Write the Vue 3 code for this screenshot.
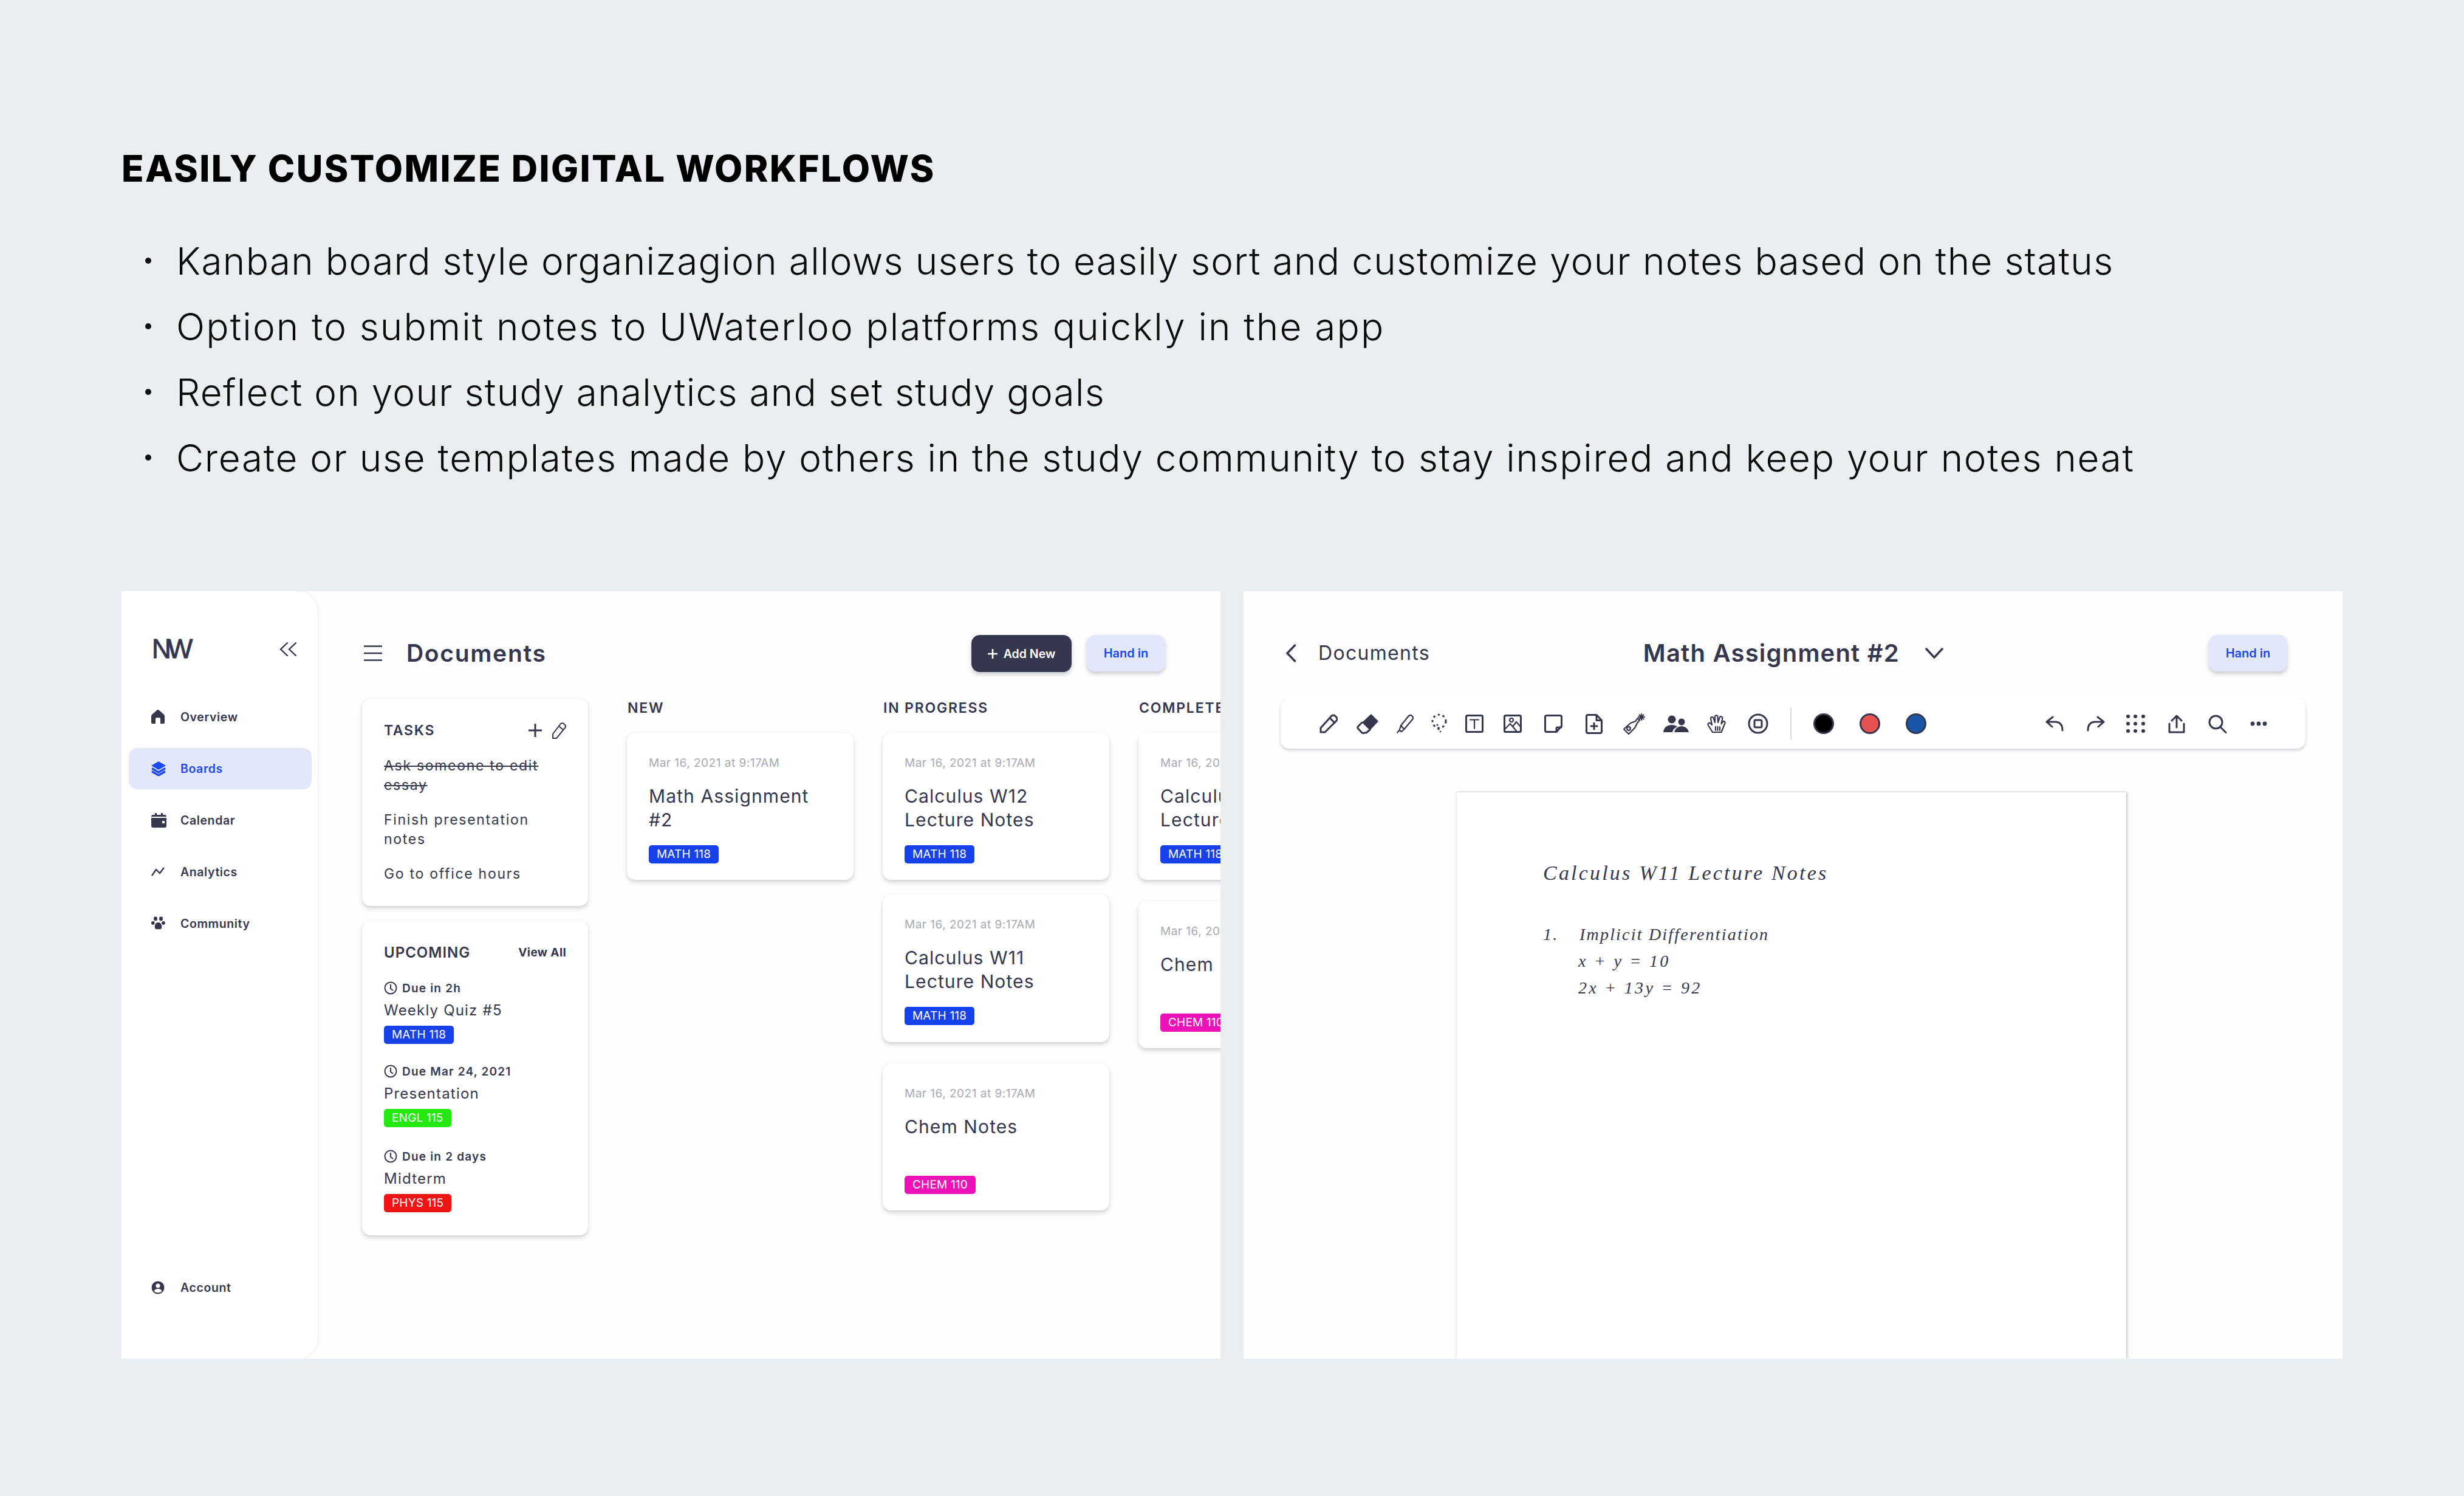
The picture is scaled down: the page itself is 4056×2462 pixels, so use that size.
<script setup>
const bullets = [
  'Kanban board style organizagion allows users to easily sort and customize your notes based on the status',
  'Option to submit notes to UWaterloo platforms quickly in the app',
  'Reflect on your study analytics and set study goals',
  'Create or use templates made by others in the study community to stay inspired and keep your notes neat'
]
const navIcons = {
  Overview: '<path d="M11 0 Q12 0 13 1 L21 8 Q22 9 22 11 V21 Q22 23 20 23 H15 V15 Q15 13 13 13 H9 Q7 13 7 15 V23 H2 Q0 23 0 21 V11 Q0 9 1 8 L9 1 Q10 0 11 0Z" fill="currentColor"/>',
  Boards: '<path d="M12 0 L24 7 L12 14 L0 7Z" fill="currentColor"/><path d="M1 11.5 L12 18 L23 11.5 M1 16.5 L12 23 L23 16.5" fill="none" stroke="currentColor" stroke-width="3.4"/>',
  Calendar: '<path d="M6 0 H9 V3 H16 V0 H19 V3 H22 Q25 3 25 6 V21 Q25 24 22 24 H3 Q0 24 0 21 V6 Q0 3 3 3 H6Z" fill="currentColor"/><rect x="0" y="6" width="25" height="2" fill="#fff"/><rect x="18" y="13" width="4" height="4" fill="#fff"/>',
  Analytics: '<path d="M1 18 L8 8 L14 14 L21 5" fill="none" stroke="currentColor" stroke-width="2.4"/>',
  Community: '<ellipse cx="7" cy="4" rx="3" ry="3.4" fill="currentColor"/><ellipse cx="16" cy="4" rx="3" ry="3.4" fill="currentColor"/><ellipse cx="2.8" cy="11" rx="2.8" ry="3" fill="currentColor"/><ellipse cx="20" cy="11" rx="2.8" ry="3" fill="currentColor"/><path d="M11.5 10 C16 10 18 15 17 19 C16 22.500 13 21 11.500 21 C10 21 7 22.500 6 19 C5 15 7 10 11.500 10Z" fill="currentColor"/>',
  Account: '<circle cx="11" cy="12" r="10.500" fill="currentColor"/><circle cx="11" cy="9" r="3.600" fill="#fff"/><path d="M4.500 18 Q6 14 11 14 Q16 14 17.500 18 Q14.500 20.500 11 20.500 Q7.500 20.500 4.500 18Z" fill="#fff"/>'
}
const nav = ['Overview', 'Boards', 'Calendar', 'Analytics', 'Community']
const tasks = [
  { text: 'Ask someone to edit\nessay', done: true },
  { text: 'Finish presentation\nnotes', done: false },
  { text: 'Go to office hours', done: false }
]
const upcoming = [
  { due: 'Due in 2h', title: 'Weekly Quiz #5', tag: 'MATH 118', color: 'math' },
  { due: 'Due Mar 24, 2021', title: 'Presentation', tag: 'ENGL 115', color: 'engl' },
  { due: 'Due in 2 days', title: 'Midterm', tag: 'PHYS 115', color: 'phys' }
]
const date = 'Mar 16, 2021 at 9:17AM'
const w12 = { title: 'Calculus W12\nLecture Notes', tag: 'MATH 118', color: 'math' }
const columns = [
  { name: 'NEW', cards: [{ title: 'Math Assignment\n#2', tag: 'MATH 118', color: 'math' }] },
  { name: 'IN PROGRESS', cards: [
    w12,
    { title: 'Calculus W11\nLecture Notes', tag: 'MATH 118', color: 'math', near: true },
    { title: 'Chem Notes', tag: 'CHEM 110', color: 'chem' }
  ] },
  { name: 'COMPLETE', cards: [w12, { title: 'Chem Notes', tag: 'CHEM 110', color: 'chem' }] }
]
const S = 'fill="none" stroke="#35374F" stroke-width="3" stroke-linejoin="round" stroke-linecap="round"'
const T = 'fill="none" stroke="#35374F" stroke-width="2.2" stroke-linejoin="round" stroke-linecap="round"'
const tools = [
  { w: 30, h: 32, gap: 0, body: `<path d="M2 30 V23 L20 3 Q23 1 25.500 3 L28 5.500 Q30 8 28 11 L9 30Z M17 6.500 L25 14.500" ${S}/>` },
  { w: 37, h: 34, gap: 31, body: `<path d="M24 1 L36 13 L22 28 L9 15Z" fill="#35374F"/><path d="M9 15 L2.500 21.500 Q1 23 2.500 25 L9 32 Q10.500 33 13 32 L16 32 L22 27" ${S}/>` },
  { w: 30, h: 32, gap: 27, body: `<path d="M9 19 L22 3 Q25 1 27 3 L28.500 4.500 Q30 7 28 9 L14.500 25Z M9 19 L6.500 27 L10 29 L14.500 25 M6.500 27 L3 30.500" ${T}/>` },
  { w: 28, h: 33, gap: 28, body: `<circle cx="14" cy="12" r="11" fill="none" stroke="#35374F" stroke-width="3" stroke-dasharray="3.500 4.700" stroke-linecap="butt"/><circle cx="11" cy="18" r="1.600" fill="#35374F"/><circle cx="13" cy="25" r="1.600" fill="#35374F"/><circle cx="16" cy="29" r="1.300" fill="#35374F"/>` },
  { w: 30, h: 30, gap: 29, body: `<rect x="1.500" y="1.500" width="27" height="27" rx="2" ${S}/><path d="M8 8.500 H22 M15 8.500 V23" ${T}/>` },
  { w: 30, h: 30, gap: 33, body: `<rect x="1.500" y="1.500" width="27" height="27" rx="2" ${S}/><circle cx="13" cy="9" r="3" ${T}/><path d="M2 24 L11 15 L22 28 M15 20 L21 12 L28 20" ${T}/>` },
  { w: 30, h: 30, gap: 37, body: `<path d="M4 1.500 H26 Q28.500 1.500 28.500 4 V19 L20 28.500 H4 Q1.500 28.500 1.500 26 V4 Q1.500 1.500 4 1.500Z M28 21 H22 Q20 21 20 23 V28" ${S}/>` },
  { w: 28, h: 33, gap: 38, body: `<path d="M4 1.500 H18 L26.500 10.500 V29 Q26.500 31.500 24 31.500 H4 Q1.500 31.500 1.500 29 V4 Q1.500 1.500 4 1.500Z M18 2 V10.500 H26" ${S}/><path d="M14 15 V25 M9 20 H19" ${S}/>` },
  { w: 39, h: 36, gap: 33, body: `<path d="M2 27 L13 17 L21 14 L25 9 L28 12 L24 17 L20 25 L10 35Z" ${T}/><circle cx="10" cy="26" r="2.800" ${T}/><path d="M31 2 V12 M26 7 H36 M27.500 3.500 L34.500 10.500 M34.500 3.500 L27.500 10.500" ${T}/>` },
  { w: 42, h: 28, gap: 28, body: `<circle cx="14" cy="7" r="6.500" fill="#35374F"/><circle cx="30" cy="11" r="5.500" fill="#35374F"/><path d="M0 28 Q1 17 13 16 Q20 16 23 19 Q16 22 15 28Z M18 28 Q20 19 30 18 Q40 19 42 28Z" fill="#35374F"/>` },
  { w: 32, h: 32, gap: 29, body: `<path d="M10 30 L2.500 18 Q2 14.500 5.500 14.500 L9 18 L7 7 Q7.500 4 11 5.500 L14 14 L14 3.500 Q16.500 0.500 18.500 3.500 L19 14 L22 5 Q24.500 3 26.500 6 L24.500 16.500 L27.500 12 Q31 11.500 30.500 15 L26 26 L24.500 30Z" ${T}/><path d="M15 21 V27 M18.500 21 V27 M22 21 V27" ${T}/>` },
  { w: 34, h: 34, gap: 36, body: `<circle cx="17" cy="17" r="15" ${S}/><rect x="11" y="11" width="12" height="12" rx="2" ${S}/>` }
]
const actions = [
  { w: 30, h: 26, gap: 0, body: `<path d="M12 2 L2 10 L11 18 M2 10 H16 Q28 10 28 24" ${S}/>` },
  { w: 31, h: 26, gap: 37, body: `<path d="M19 2 L29 10 L20 18 M29 10 H15 Q3 10 3 24" ${S}/>` },
  { w: 31, h: 30, gap: 35, body: `<g fill="#35374F"><circle cx="3" cy="3" r="3"/><circle cx="15" cy="3" r="3"/><circle cx="28" cy="3" r="3"/><circle cx="3" cy="15" r="3"/><circle cx="15" cy="15" r="3"/><circle cx="28" cy="15" r="3"/><circle cx="3" cy="27" r="3"/><circle cx="15" cy="27" r="3"/><circle cx="28" cy="27" r="3"/></g>` },
  { w: 28, h: 31, gap: 38, body: `<path d="M14 21 V3 M6 10 L14 2 L22 10 M2 15 V29 H26 V15" ${S}/>` },
  { w: 31, h: 31, gap: 38, body: `<circle cx="12.500" cy="12.500" r="10.500" ${S}/><path d="M20 20.500 L29 29.500" ${S}/>` },
  { w: 28, h: 8, gap: 38, body: `<g fill="#35374F"><circle cx="4" cy="4" r="3.400"/><circle cx="14" cy="4" r="3.400"/><circle cx="24" cy="4" r="3.400"/></g>` }
]
</script>

<template>
  <div class="page">
    <h1 class="heading">EASILY CUSTOMIZE DIGITAL WORKFLOWS</h1>
    <ul class="bullets">
      <li v-for="b in bullets" :key="b" class="bullet"><span class="dot"></span>{{ b }}</li>
    </ul>
    <div class="panels">
      <section class="panel">
        <aside class="sidebar">
          <div class="logo-row">
            <span class="logo">NW</span>
            <svg class="collapse" width="29" height="23" viewBox="0 0 29 23"><path d="M13 1 L2 11.500 L13 22 M27 1 L16 11.500 L27 22" fill="none" stroke="#35374F" stroke-width="2.400" stroke-linecap="round"/></svg>
          </div>
          <nav class="nav">
            <a v-for="n in nav" :key="n" class="nav-item" :class="{ active: n === 'Boards' }">
              <svg class="nav-icon" width="25" height="24" viewBox="0 0 25 24" v-html="navIcons[n]"></svg>{{ n }}
            </a>
          </nav>
          <a class="nav-item account">
            <svg class="nav-icon" width="25" height="24" viewBox="0 0 25 24" v-html="navIcons.Account"></svg>Account
          </a>
        </aside>
        <main class="main">
          <header class="topbar">
            <svg class="burger" width="30" height="26" viewBox="0 0 30 26"><path d="M0 1.500 H30 M0 13 H30 M0 24.500 H30" stroke="#35374F" stroke-width="2.600"/></svg>
            <h2 class="doc-title">Documents</h2>
            <button class="btn-dark">
              <svg width="16" height="16" viewBox="0 0 16 16"><path d="M8 0 V16 M0 8 H16" stroke="#fff" stroke-width="2.600"/></svg>
              Add New
            </button>
            <button class="btn-light">Hand in</button>
          </header>
          <div class="board">
            <div class="left-col">
              <div class="card tasks">
                <div class="card-head">
                  <span class="head-label">TASKS</span>
                  <svg width="62" height="32" viewBox="0 0 62 32"><path d="M11 5 V27 M0 16 H22" stroke="#35374F" stroke-width="3"/><path d="M40 29 V22 L53 5 Q56 3 58 5 L60 7 Q62 9 60 12 L46 29Z M50 9 L57 15" fill="none" stroke="#35374F" stroke-width="2"/></svg>
                </div>
                <p v-for="t in tasks" :key="t.text" class="task" :class="{ done: t.done }">{{ t.text }}</p>
              </div>
              <div class="card upcoming">
                <div class="card-head">
                  <span class="head-label up">UPCOMING</span>
                  <span class="view-all">View All</span>
                </div>
                <div v-for="u in upcoming" :key="u.title" class="up-item">
                  <div class="due">
                    <svg width="22" height="22" viewBox="0 0 22 22"><circle cx="11" cy="11" r="9.500" fill="none" stroke="#35374F" stroke-width="2"/><path d="M11 5 V12 L15 15" fill="none" stroke="#35374F" stroke-width="2"/></svg>
                    {{ u.due }}
                  </div>
                  <div class="up-title">{{ u.title }}</div>
                  <span class="tag up-tag" :class="u.color">{{ u.tag }}</span>
                </div>
              </div>
            </div>
            <div v-for="c in columns" :key="c.name" class="column">
              <div class="col-name">{{ c.name }}</div>
              <div class="col-cards">
                <article v-for="(k, i) in c.cards" :key="i" class="card kanban" :class="{ near: k.near }">
                  <div class="date">{{ date }}</div>
                  <div class="k-title">{{ k.title }}</div>
                  <span class="tag" :class="k.color">{{ k.tag }}</span>
                </article>
              </div>
            </div>
          </div>
        </main>
      </section>

      <section class="panel editor">
        <header class="ed-top">
          <svg width="18" height="30" viewBox="0 0 18 30"><path d="M15.500 2 L3 15 L15.500 28" fill="none" stroke="#35374F" stroke-width="3.400" stroke-linecap="round"/></svg>
          <span class="back">Documents</span>
          <h2 class="ed-title">Math Assignment #2</h2>
          <svg width="30" height="18" viewBox="0 0 30 18"><path d="M2 2 L15 16 L28 2" fill="none" stroke="#35374F" stroke-width="3.400" stroke-linecap="round"/></svg>
          <button class="btn-light ed-hand">Hand in</button>
        </header>
        <div class="toolbar">
          <svg v-for="(t, i) in tools" :key="i" class="tool" :style="{ marginLeft: t.gap + 'px' }" :width="t.w" :height="t.h" :viewBox="`0 0 ${t.w} ${t.h}`" v-html="t.body"></svg>
          <span class="divider"></span>
          <span class="swatch black"></span>
          <span class="swatch red"></span>
          <span class="swatch blue"></span>
          <span class="tool-actions">
            <svg v-for="(t, i) in actions" :key="i" class="tool" :style="{ marginLeft: t.gap + 'px' }" :width="t.w" :height="t.h" :viewBox="`0 0 ${t.w} ${t.h}`" v-html="t.body"></svg>
          </span>
        </div>
        <div class="paper">
          <div class="hand-title">Calculus W11 Lecture Notes</div>
          <div class="hand-line first"><span class="num">1.</span>Implicit Differentiation</div>
          <div class="hand-line math-line">x + y = 10</div>
          <div class="hand-line math-line">2x + 13y = 92</div>
        </div>
      </section>
    </div>
  </div>
</template>

<style>
html, body { margin: 0; background: #E9EEF1; }
</style>

<style scoped>
.page {
  width: 4056px;
  height: 2462px;
  box-sizing: border-box;
  padding: 243px 200px 0;
  background: #E9EEF1;
  font-family: Inter, "Liberation Sans", sans-serif;
  color: #35374F;
  overflow: hidden;
}
.heading {
  margin: 0;
  font-size: 60px;
  line-height: 68px;
  font-weight: 800;
  color: #000;
  letter-spacing: 2.4px;
  white-space: nowrap;
}
.bullets { list-style: none; margin: 64px 0 0; padding: 0; }
.bullet {
  display: flex;
  align-items: center;
  height: 108px;
  font-size: 62px;
  font-weight: 300;
  color: #0b0b0b;
  white-space: nowrap;
  letter-spacing: 1.33px;
}
.bullet:nth-child(2) { letter-spacing: 2.15px; }
.bullet:nth-child(3) { letter-spacing: 1.3px; }
.bullet:nth-child(4) { letter-spacing: 1.7px; }
.dot { width: 10px; height: 10px; border-radius: 50%; background: #111; margin: 0 41px 0 39px; flex: none; }
.panels { display: flex; gap: 38px; margin-top: 166px; }
.panel { width: 1809px; height: 1263px; background: #FDFDFD; display: flex; overflow: hidden; }
.sidebar {
  width: 323px;
  flex: none;
  background: #fff;
  border-radius: 0 34px 34px 0;
  box-shadow: 1px 0 4px rgba(53, 55, 79, 0.08);
  display: flex;
  flex-direction: column;
  padding-bottom: 83px;
  box-sizing: border-box;
}
.logo-row { display: flex; align-items: center; justify-content: space-between; height: 32px; margin: 79px 34px 0 50px; }
.logo { font-family: "Liberation Sans", sans-serif; font-size: 44px; line-height: 32px; letter-spacing: -6px; color: #35374F; font-weight: 400; -webkit-text-stroke: 1px #35374F; }
.nav { display: flex; flex-direction: column; gap: 17px; margin-top: 62px; }
.nav-item {
  display: flex;
  align-items: center;
  gap: 23px;
  width: 301px;
  height: 68px;
  margin-left: 12px;
  padding-left: 37px;
  box-sizing: border-box;
  border-radius: 14px;
  font-size: 19.500px;
  font-weight: 600;
  letter-spacing: 0.6px;
  color: #35374F;
}
.nav-item.active { background: #E2E7FC; color: #1A49F0; }
.nav-icon { flex: none; }
.account { margin-top: auto; }
.main { flex: 1; min-width: 0; overflow: hidden; }
.topbar { display: flex; align-items: center; height: 61px; margin-top: 71px; padding: 0 91px 0 76px; }
.doc-title { margin: 0 auto 0 40px; font-size: 39px; font-weight: 600; letter-spacing: 1.7px; }
.btn-dark, .btn-light { border: 0; font: inherit; display: flex; align-items: center; justify-content: center; }
.btn-dark {
  width: 165px; height: 61px; background: #35374F; color: #fff; border-radius: 14px;
  font-size: 19.500px; font-weight: 600; gap: 10px; margin-right: 25px; margin-top: 2px;
  box-shadow: 0 4px 6px rgba(53, 55, 79, 0.25);
}
.btn-light {
  width: 129px; height: 60px; background: #E2E7FC; color: #1A49F0; border-radius: 14px;
  font-size: 20px; font-weight: 600;
  box-shadow: 0 4px 6px rgba(53, 55, 79, 0.25);
}
.board { display: flex; margin-top: 45px; padding-left: 73px; }
.left-col { width: 372px; flex: none; display: flex; flex-direction: column; gap: 24px; margin-right: 64px; }
.card { background: #fff; border-radius: 14px; box-shadow: 0 4px 6px rgba(53, 55, 79, 0.2), 0 0 3px rgba(53, 55, 79, 0.05); box-sizing: border-box; }
.tasks { padding: 36px 36px 37px; height: 341px; }
.upcoming { padding: 36px 36px 37px; height: 518px; }
.card-head { display: flex; align-items: center; justify-content: space-between; height: 32px; }
.head-label { font-size: 23px; font-weight: 600; letter-spacing: 1.7px; }
.head-label.up { font-size: 24px; letter-spacing: 1px; }
.view-all { font-size: 19px; font-weight: 700; letter-spacing: 0.4px; }
.task { margin: 25px 0 0; font-size: 23px; line-height: 32px; white-space: pre-line; letter-spacing: 1.7px; }
.task:first-of-type { margin-top: 26px; }
.task.done { text-decoration: line-through; }
.up-item { margin-top: 32px; }
.up-item:nth-of-type(2) { margin-top: 30px; }
.up-item:nth-of-type(4) { margin-top: 35px; }
.due { display: flex; align-items: center; gap: 8px; height: 26px; font-size: 19px; font-weight: 600; letter-spacing: 1.2px; }
.up-title { height: 32px; line-height: 32px; margin-top: 8px; font-size: 24px; letter-spacing: 1.2px; }
.tag {
  display: inline-block; height: 30px; line-height: 30px; padding: 0 13px; border-radius: 5px;
  font-size: 19px; color: #fff; letter-spacing: 0.2px; white-space: nowrap; vertical-align: top;
}
.up-tag { margin-top: 9px; }
.math { background: #1741EA; }
.engl { background: #22EA11; }
.phys { background: #F01515; }
.chem { background: #EC12B8; }
.column { width: 373px; flex: none; margin-right: 48px; }
.col-name { height: 30px; line-height: 30px; font-size: 23px; font-weight: 600; margin-left: 1px; letter-spacing: 1.8px; white-space: nowrap; }
.col-cards { display: flex; flex-direction: column; gap: 35px; margin-top: 26px; }
.kanban { height: 242px; padding: 37px 36px 0; white-space: nowrap; }
.kanban.near { margin-top: -11px; height: 243px; }
.date { height: 26px; line-height: 26px; font-size: 19px; letter-spacing: 0.5px; color: #A8A9B2; }
.k-title { height: 78px; margin: 22px 0; font-size: 30px; line-height: 39px; white-space: pre-line; letter-spacing: 1.1px; }
.editor { flex-direction: column; }
.ed-top { display: flex; align-items: center; height: 61px; margin-top: 71px; padding: 0 91px 0 69px; }
.back { margin-left: 36px; font-size: 32px; letter-spacing: 1.3px; }
.ed-title { margin: 0 42px 0 351px; font-size: 40px; font-weight: 600; letter-spacing: 1.2px; white-space: nowrap; }
.ed-hand { margin-left: auto; }
.toolbar {
  display: flex; align-items: center; width: 1687px; height: 82px; margin: 45px 0 0 61px; padding-left: 64px;
  box-sizing: border-box; background: #fff; border-radius: 14px;
  box-shadow: 0 3px 4px rgba(53, 55, 79, 0.2), 0 0 3px rgba(53, 55, 79, 0.05); flex: none;
}
.tool { flex: none; }
.divider { width: 2px; height: 52px; background: #D9D9DE; margin: 0 36px 0 36px; flex: none; }
.swatch { width: 34px; height: 34px; box-sizing: border-box; border-radius: 50%; border: 3px solid #35374F; margin-right: 42px; flex: none; }
.black { background: #000; }
.red { background: #E95252; }
.blue { background: #1A56A8; }
.tool-actions { display: flex; align-items: center; margin-left: 154px; }
.paper {
  flex: 1; width: 1102px; margin: 72px 0 0 351px; padding: 113px 0 0 142px; box-sizing: border-box;
  background: #fff; box-shadow: 2px 0 4px rgba(53, 55, 79, 0.22), 0 0 4px rgba(53, 55, 79, 0.15);
  font-family: "Liberation Serif", serif; font-style: italic; white-space: nowrap;
}
.hand-title { height: 40px; line-height: 40px; font-size: 34px; letter-spacing: 3.200px; }
.hand-line { height: 44px; line-height: 44px; font-size: 28px; letter-spacing: 2.200px; }
.math-line { margin-left: 58px; letter-spacing: 3.300px; }
.hand-line.first { margin-top: 59px; display: flex; }
.num { width: 60px; }
</style>
